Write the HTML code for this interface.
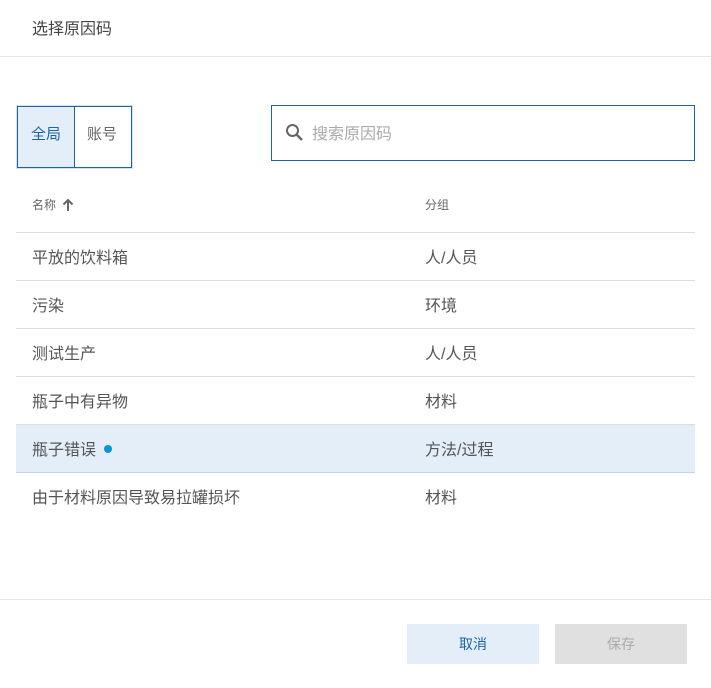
<!DOCTYPE html>
<html><head><meta charset="utf-8"><style>
body{margin:0;width:711px;height:688px;background:#fff;font-family:"Liberation Sans","Noto Sans CJK SC",sans-serif;position:relative;overflow:hidden;color:#555}
.a{position:absolute}
.t{font-size:16px;line-height:20px}
.row{position:absolute;left:16px;width:679px;height:47px;border-bottom:1px solid #ddd}
.row span{position:absolute;top:16px;font-size:16px;line-height:20px;color:#555}
</style></head><body>
<div class="a t" style="left:32px;top:20px;color:#444">选择原因码</div>
<div class="a" style="left:0;top:56px;width:711px;height:1px;background:#e6e6e6"></div>
<div class="a" style="left:17px;top:106px;width:113px;height:60px;border:1px solid #1c64a8;box-shadow:0 0 0 1px #d6e1ec"></div>
<div class="a" style="left:18px;top:107px;width:56px;height:60px;background:#e4eef8"></div>
<div class="a" style="left:74px;top:107px;width:1px;height:60px;background:#1c64a8"></div>
<div class="a" style="left:31px;top:125px;font-size:15px;line-height:20px;color:#1c64a8">全局</div>
<div class="a" style="left:87px;top:125px;font-size:15px;line-height:20px;color:#666">账号</div>
<div class="a" style="left:271px;top:105px;width:422px;height:54px;border:1px solid #1c64a8"></div>
<svg class="a" style="left:285px;top:123px" width="20" height="20" viewBox="0 0 20 20"><circle cx="7.5" cy="7.5" r="5.5" fill="none" stroke="#666" stroke-width="2"/><path d="M11.5 11.5L17 17" stroke="#666" stroke-width="2.4"/></svg>
<div class="a" style="left:312px;top:125px;font-size:16px;line-height:20px;color:#aaa">搜索原因码</div>
<div class="a" style="left:32px;top:197px;font-size:12px;line-height:16px;color:#666">名称</div>
<svg class="a" style="left:62px;top:198px" width="12" height="14" viewBox="0 0 12 14"><path d="M6 13V2M1.5 6.5L6 2l4.5 4.5" fill="none" stroke="#666" stroke-width="2"/></svg>
<div class="a" style="left:425px;top:197px;font-size:12px;line-height:16px;color:#666">分组</div>
<div class="a" style="left:16px;top:232px;width:679px;height:1px;background:#ddd"></div>
<div class="row" style="top:233px"><span style="left:16px">平放的饮料箱</span><span style="left:409px">人/人员</span></div>
<div class="row" style="top:281px"><span style="left:16px">污染</span><span style="left:409px">环境</span></div>
<div class="row" style="top:329px"><span style="left:16px">测试生产</span><span style="left:409px">人/人员</span></div>
<div class="row" style="top:377px"><span style="left:16px">瓶子中有异物</span><span style="left:409px">材料</span></div>
<div class="row" style="top:425px;background:#e4eef8;border-bottom-color:#c5d3e0"><span style="left:16px">瓶子错误</span><div class="a" style="left:88px;top:20px;width:8px;height:8px;border-radius:50%;background:#0a94d8"></div><span style="left:409px">方法/过程</span></div>
<div class="a t" style="left:32px;top:489px">由于材料原因导致易拉罐损坏</div>
<div class="a t" style="left:425px;top:489px">材料</div>
<div class="a" style="left:0;top:599px;width:711px;height:1px;background:#e6e6e6"></div>
<div class="a" style="left:407px;top:624px;width:132px;height:40px;background:#e4eef8;color:#1c64a8;font-size:14px;line-height:40px;text-align:center">取消</div>
<div class="a" style="left:555px;top:624px;width:132px;height:40px;background:#e0e0e0;color:#aaa;font-size:14px;line-height:40px;text-align:center">保存</div>
</body></html>
